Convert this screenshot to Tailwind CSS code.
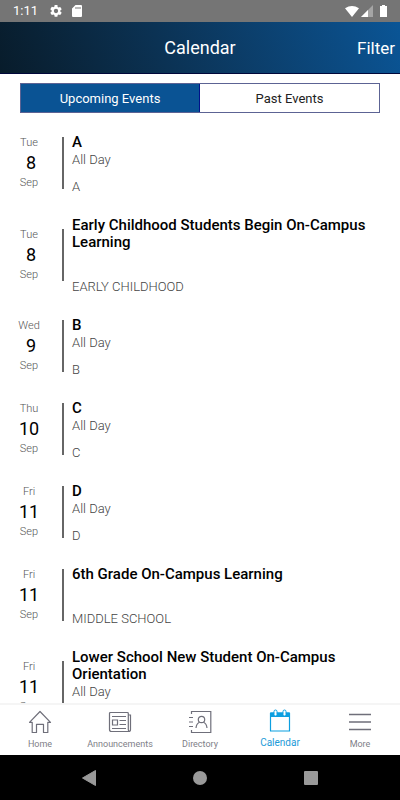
<!DOCTYPE html>
<html lang="en">
<head>
    <meta charset="utf-8">
    <meta name="viewport" content="width=device-width, initial-scale=1">
    <title>Calendar</title>
    <script src="https://cdn.jsdelivr.net/npm/@tailwindcss/browser@4"></script>
</head>
<body class="flex flex-col h-screen overflow-hidden bg-white font-['Roboto',sans-serif] text-black antialiased">

    <!-- status bar -->
    <div class="flex items-center shrink-0 h-[22px] pl-[13px] pr-[13px] bg-[#757575] text-white">
        <span class="text-[13px]">1:11</span>
        <svg class="ml-3 size-3" viewBox="2 2 20 20" fill="currentColor"><path d="M19.14 12.94c.04-.3.06-.61.06-.94s-.02-.64-.07-.94l2.03-1.58a.49.49 0 0 0 .12-.61l-1.92-3.32a.49.49 0 0 0-.59-.22l-2.39.96a7 7 0 0 0-1.62-.94l-.36-2.54A.48.48 0 0 0 13.92 2h-3.84a.48.48 0 0 0-.47.41l-.36 2.54c-.59.24-1.13.57-1.62.94l-2.39-.96a.48.48 0 0 0-.59.22L2.74 8.87a.48.48 0 0 0 .12.61l2.03 1.58a6 6 0 0 0 0 1.88l-2.03 1.58a.49.49 0 0 0-.12.61l1.92 3.32c.12.22.37.29.59.22l2.39-.96c.5.38 1.03.7 1.62.94l.36 2.54c.05.24.24.41.48.41h3.84c.24 0 .44-.17.47-.41l.36-2.54c.59-.24 1.13-.56 1.62-.94l2.39.96c.22.08.47 0 .59-.22l1.92-3.32a.48.48 0 0 0-.12-.61zM12 15.6a3.6 3.6 0 1 1 0-7.2 3.6 3.6 0 0 1 0 7.2z"/></svg>
        <svg class="ml-[10px] w-[10px] h-3" viewBox="0 0 10 12" fill="currentColor"><path fill-rule="evenodd" d="M3.5 0H9q1 0 1 1v10q0 1-1 1H1q-1 0-1-1V3.500zM3.500 2v2h1V2zM5.500 2v2h1V2zM7.500 2v2h1V2z"/></svg>
        <div class="flex items-center ml-auto">
            <svg class="w-[14px] h-[11px]" viewBox="0 0 14 11" fill="currentColor"><path d="M0 2.300Q7-2.300 14 2.300L7 11z"/></svg>
            <svg class="ml-[2px] w-3 h-3" viewBox="0 0 12 12" fill="currentColor"><path d="M12 0v12H0z" opacity=".35"/><path d="M7 5v7H0z"/></svg>
            <svg class="ml-[7px] w-[7px] h-3" viewBox="0 0 7 12" fill="currentColor"><path d="M2 0h3v1h2v11H0V1h2z"/></svg>
        </div>
    </div>

    <!-- title bar -->
    <header class="grid grid-cols-3 items-center shrink-0 h-[52px] px-[5px] border-b border-[#00073a] bg-linear-70 from-[#081c2b] to-[#0a5596] text-white">
        <h1 class="col-start-2 text-center text-lg">Calendar</h1>
        <button class="justify-self-end text-[17px] leading-7">Filter</button>
    </header>

    <main class="flex-1 min-h-0 overflow-hidden px-5 pt-[9px]">
        <div class="grid grid-cols-2 h-[30px] border border-[#5c6394] text-[13px]">
            <button class="pt-[2px] bg-[#0a5394] text-white border-r border-[#00128a]">Upcoming Events</button>
            <button class="pt-[2px] text-[#222]">Past Events</button>
        </div>

        <ul class="flex flex-col gap-[17px] pt-[17px]" id="events"></ul>
    </main>

    <!-- tabs -->
    <nav class="grid grid-cols-5 shrink-0 h-[52px] border-t-2 border-[#f5f5f5] bg-white text-[9px] leading-3 text-[#808088]">
        <a href="#" class="flex flex-col items-center pt-[5px] gap-1">
            <svg class="size-6" viewBox="0 0 24 24" fill="none" stroke="#6f6f7a" stroke-width="1.200" stroke-linejoin="round"><path d="M1.500 12.300 12 1.500l10.500 10.800h-2.700v10.200h-4.300v-8.200h-7v8.200H4.200V12.300z"/></svg>
            Home
        </a>
        <a href="#" class="flex flex-col items-center pt-[5px] gap-1">
            <svg class="size-6" viewBox="0 0 24 24" fill="none" stroke="#6f6f7a" stroke-width="1.200"><path d="M20.300 20V3.500q0-1-1-1H2.500q-1 0-1 1v16q0 2 2 2h17q2 0 2-2V5h-2.200M20.300 19.500q0 2 1 2M4 6.500h14M11.500 10.500H18M11.500 14.500H18M4 18.500h14"/><path d="M4.500 10h5v5h-5z"/></svg>
            Announcements
        </a>
        <a href="#" class="flex flex-col items-center pt-[5px] gap-1">
            <svg class="size-6" viewBox="0 0 24 24" fill="none" stroke="#6f6f7a" stroke-width="1.200"><path d="M3.500 4V1.500h19.300v21H3.500V20M1 7.500h4M1 12h4M1 16.500h4"/><circle cx="13.500" cy="9.500" r="3.200"/><path d="M8 18q.5-4.500 3.500-5.700M19 18q-.5-4.500-3.500-5.700"/></svg>
            Directory
        </a>
        <a href="#" class="flex flex-col items-center pt-1 gap-1 text-[10px] text-[#1c9ad8]" aria-current="page">
            <svg class="size-6" viewBox="0 0 24 24" fill="none" stroke="#0d9fe0"><path d="M2.500 4h19v18h-19z" stroke-width="1.200" stroke-linejoin="round"/><path d="M2.500 4h19v3.500h-19z" fill="#0d9fe0"/><rect x="6" y="1" width="3" height="6" rx="1.500" fill="#fff"/><rect x="15" y="1" width="3" height="6" rx="1.500" fill="#fff"/></svg>
            Calendar
        </a>
        <a href="#" class="flex flex-col items-center pt-[5px] gap-1">
            <svg class="size-6" viewBox="0 0 24 24" fill="none" stroke="#6f6f7a" stroke-width="1.500"><path d="M1 4.500h22M1 12h22M1 19.500h22"/></svg>
            More
        </a>
    </nav>

    <!-- android buttons -->
    <div class="flex items-center justify-center shrink-0 h-[45px] gap-[97px] bg-black text-[#999]">
        <button aria-label="Back"><svg class="w-[14px] h-4" viewBox="0 0 14 16" fill="currentColor"><path d="M13.500 .5v15L.5 8z" stroke="currentColor" stroke-linejoin="round"/></svg></button>
        <button aria-label="Home" class="size-[14px] rounded-full bg-[#999]"></button>
        <button aria-label="Recent apps" class="size-[14px] rounded-[1px] bg-[#999]"></button>
    </div>

    <script>
        const events = [
            { day: 'Tue', date: 8, title: 'A', time: 'All Day', note: 'A' },
            { day: 'Tue', date: 8, title: 'Early Childhood Students Begin On-Campus Learning', time: '', note: 'EARLY CHILDHOOD' },
            { day: 'Wed', date: 9, title: 'B', time: 'All Day', note: 'B' },
            { day: 'Thu', date: 10, title: 'C', time: 'All Day', note: 'C' },
            { day: 'Fri', date: 11, title: 'D', time: 'All Day', note: 'D' },
            { day: 'Fri', date: 11, title: '6th Grade On-Campus Learning', time: '', note: 'MIDDLE SCHOOL' },
            { day: 'Fri', date: 11, title: 'Lower School New Student On-Campus Orientation', time: 'All Day', note: '' },
        ];

        document.getElementById('events').innerHTML = events.map(e => `
            <li class="flex items-center">
                <div class="w-[18px] flex flex-col items-center text-[11px] leading-5 text-[#555] font-light">
                    <span>${e.day}</span>
                    <span class="text-lg leading-5 text-black font-normal ${e.date < 10 ? 'pl-1' : ''}">${e.date}</span>
                    <span>Sep</span>
                </div>
                <div class="ml-6 w-[2px] h-[52px] bg-[#666]"></div>
                <div class="flex-1 ml-2 pt-1 text-[13px] leading-[18px] text-[#444] font-light">
                    <h2 class="text-[15px] leading-[17px] font-medium text-black">${e.title}</h2>
                    <p class="h-[18px]">${e.time}</p>
                    <p class="mt-[9px] h-[18px]">${e.note}</p>
                </div>
            </li>`).join('');
    </script>
</body>
</html>
